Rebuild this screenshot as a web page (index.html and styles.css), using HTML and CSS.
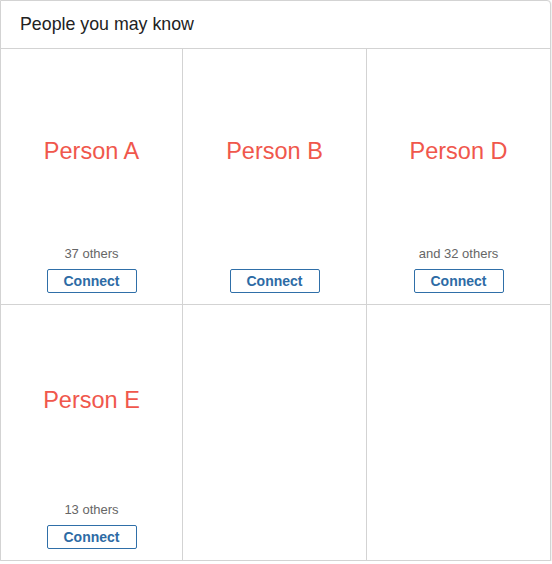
FILE: index.html
```html
<!DOCTYPE html>
<html lang="en">
<head>
    <meta charset="UTF-8" />
    <meta name="viewport" content="width=device-width, initial-scale=1.0"/>
    <title>People you may know</title>
    <link rel="stylesheet" href="styles.css">
</head>
<body>

<div class="pymk">

    <!-- Header -->
    <div class="pymk-header">
        <h2>People you may know</h2>
    </div>

    <!-- Suggestion cards -->
    <div class="pymk-grid">
        <div class="card">
            <div class="card-name">Person A</div>
            <div class="card-shared">37 others</div>
            <button class="connect">Connect</button>
        </div>
        <div class="card">
            <div class="card-name">Person B</div>
            <div class="card-shared"></div>
            <button class="connect">Connect</button>
        </div>
        <div class="card card-last">
            <div class="card-name">Person D</div>
            <div class="card-shared">and 32 others</div>
            <button class="connect">Connect</button>
        </div>
        <div class="card">
            <div class="card-name card-name-high">Person E</div>
            <div class="card-shared">13 others</div>
            <button class="connect">Connect</button>
        </div>
        <div class="card card-empty"></div>
        <div class="card card-empty card-last"></div>
    </div>

</div>

</body>
</html>
```

FILE: styles.css
```css
* {
  box-sizing: border-box;
  margin: 0;
  padding: 0;
  font-family: 'Liberation Sans', Arial, sans-serif;
}

body {
  background: #fff;
}

.pymk {
  width: 551px;
  background: white;
  border: 1px solid #d3d3d3;
  border-top-right-radius: 4px;
  box-shadow: 0 1px 2px rgba(0,0,0,0.2);
}

.pymk-header {
  height: 48px;
  display: flex;
  align-items: center;
  padding: 0 19px 1px;
  border-bottom: 1px solid #d3d3d3;
}

.pymk-header h2 {
  font-size: 17.8px;
  font-weight: normal;
  color: #222;
}

.pymk-grid {
  display: grid;
  grid-template-columns: 182px 184px 1fr;
}

.card {
  height: 256px;
  display: flex;
  flex-direction: column;
  align-items: center;
  border-right: 1px solid #d3d3d3;
  border-bottom: 1px solid #d3d3d3;
  padding-bottom: 11px;
}

.card-last {
  border-right: none;
}

.pymk-grid .card:nth-child(n+4) {
  border-bottom: none;
  height: 255px;
}

.card-name {
  margin-top: 88px;
  font-size: 23.5px;
  line-height: 28px;
  color: #f0574c;
}

.card-name-high {
  margin-top: 81px;
}

.card-shared {
  margin-top: auto;
  margin-bottom: 7px;
  height: 16px;
  font-size: 13px;
  line-height: 16px;
  color: #666;
}

.connect {
  width: 90px;
  height: 24px;
  background: white;
  border: 1px solid #2f6fa8;
  border-radius: 2px;
  color: #2d6ba5;
  font-size: 14px;
  font-weight: bold;
  cursor: pointer;
}

.connect:hover {
  background: #eef5fb;
}
```
